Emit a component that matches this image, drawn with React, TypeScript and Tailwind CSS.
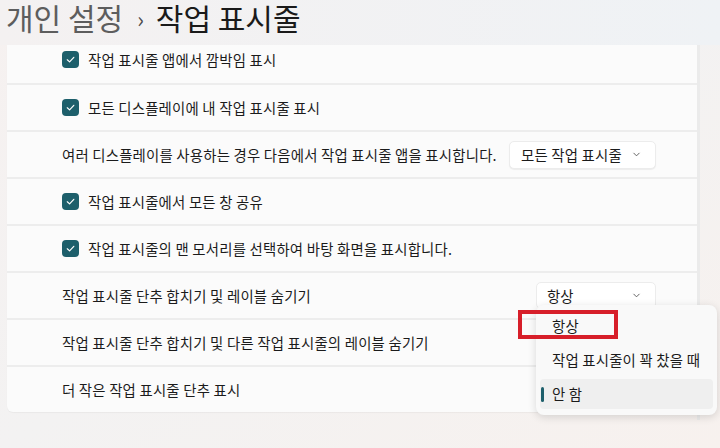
import React from 'react';

const font = { fontFamily: '"Noto Sans CJK KR", "Noto Sans", sans-serif' };

const Check = () => (
  <span className="flex h-[17px] w-[17px] shrink-0 items-center justify-center rounded-[4px] bg-[#1d5f6b]">
    <svg width="11" height="11" viewBox="0 0 12 12" fill="none">
      <path d="M2.5 6.3 L5 8.6 L9.6 3.6" stroke="white" strokeWidth="1.3" strokeLinecap="round" strokeLinejoin="round" />
    </svg>
  </span>
);

const Chevron = () => (
  <svg width="9" height="9" viewBox="0 0 10 10" fill="none">
    <path d="M2 3.5 L5 6.5 L8 3.5" stroke="#555" strokeWidth="1" strokeLinecap="round" strokeLinejoin="round" />
  </svg>
);

const CheckRow = ({ label, top }: { label: string; top?: boolean }) => (
  <div
    className={
      top
        ? 'flex h-[38px] items-start gap-[9px] pl-[55px] pt-[6px]'
        : 'flex h-[47px] items-center gap-[9px] border-t-2 border-[#ededed] pl-[55px]'
    }
  >
    <Check />
    <span className="text-[14.4px] leading-[18px] tracking-[0.2px] text-[#1b1b1b]">{label}</span>
  </div>
);

const TextRow = ({ label, children }: { label: string; children?: React.ReactNode }) => (
  <div className="flex h-[47px] items-center justify-between border-t-2 border-[#ededed] pl-[55px] pr-[41px]">
    <span className="text-[14.4px] tracking-[0.2px] text-[#1b1b1b]">{label}</span>
    {children}
  </div>
);

export default function App() {
  return (
    <div
      className="relative h-[448px] w-[720px] overflow-hidden bg-gradient-to-br from-[#f6f1f0] via-[#f3f2f2] to-[#f7f1ee]"
      style={font}
    >
      <div className="absolute inset-x-0 top-0 h-[45px] bg-gradient-to-r from-[#f4f1f1] to-[#eff2f5]" />
      <div className="relative flex h-[45px] items-start pl-[6px] text-[30px] leading-[44px] -mt-[5px]">
        <span className="text-[#5d5d5d]">개인 설정</span>
        <span className="ml-[14px] mr-[12px] text-[22px] leading-[46px] text-[#4a4a4a]">›</span>
        <span className="text-[#1a1a1a]">작업 표시줄</span>
      </div>

      <div className="relative ml-[7px] mt-[5px] w-[690px] rounded-b-[6px] bg-[#fbfbfb] shadow-[0_1px_1px_rgba(0,0,0,0.04)]">
        <CheckRow label="작업 표시줄 앱에서 깜박임 표시" top />
        <CheckRow label="모든 디스플레이에 내 작업 표시줄 표시" />
        <TextRow label="여러 디스플레이를 사용하는 경우 다음에서 작업 표시줄 앱을 표시합니다.">
          <div className="flex h-[28px] w-[147px] items-center justify-between rounded-[5px] border border-[#ececec] bg-white pl-[11px] pr-[14px] text-[14.4px] tracking-[0.2px] text-[#1b1b1b] shadow-[0_1px_1px_rgba(0,0,0,0.06)]">
            <span>모든 작업 표시줄</span>
            <Chevron />
          </div>
        </TextRow>
        <CheckRow label="작업 표시줄에서 모든 창 공유" />
        <CheckRow label="작업 표시줄의 맨 모서리를 선택하여 바탕 화면을 표시합니다." />
        <TextRow label="작업 표시줄 단추 합치기 및 레이블 숨기기">
          <div className="flex h-[27px] w-[120px] items-center justify-between rounded-[5px] border border-[#ececec] bg-white pl-[10px] pr-[14px] text-[14.4px] text-[#1b1b1b]">
            <span>항상</span>
            <Chevron />
          </div>
        </TextRow>
        <TextRow label="작업 표시줄 단추 합치기 및 다른 작업 표시줄의 레이블 숨기기" />
        <TextRow label="더 작은 작업 표시줄 단추 표시" />
      </div>

      <div className="absolute left-[697px] top-[45px] h-[375px] w-[3px] bg-[#ebebeb]" />

      {/* flyout */}
      <div className="absolute left-[536px] top-[305px] flex h-[110px] w-[181px] flex-col rounded-[8px] bg-[#f9f9f9] px-[4px] pt-[5px] text-[14.4px] tracking-[0.2px] text-[#1b1b1b] shadow-[0_2px_8px_rgba(0,0,0,0.14)]">
        <div className="flex h-[31px] items-center pl-[12px]">항상</div>
        <div className="flex h-[38px] items-center pl-[12px]">작업 표시줄이 꽉 찼을 때</div>
        <div className="relative flex h-[30px] items-center rounded-[4px] bg-[#efefef] pl-[12px]">
          <span className="absolute left-[1px] top-[8px] h-[15px] w-[3px] rounded-full bg-[#1d5f6b]" />
          안 함
        </div>
      </div>

      <div className="absolute left-[518px] top-[310px] h-[29px] w-[100px] border-[4px] border-[#d71f2a]" />
    </div>
  );
}
